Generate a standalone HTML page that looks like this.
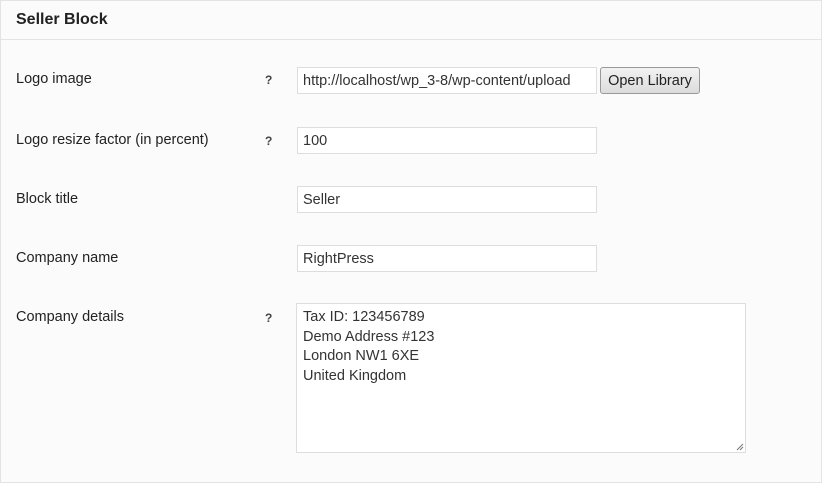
<!DOCTYPE html>
<html><head><style>
body{margin:0;width:822px;height:483px;background:#fff;font-family:"Liberation Sans",sans-serif;color:#222;}
.box{position:absolute;left:0;top:0;width:820px;height:481px;border:1px solid #e3e3e3;background:#fbfbfb;}
.hd{position:absolute;left:0;top:0;width:820px;height:38px;border-bottom:1px solid #e3e3e3;}
.hd span{position:absolute;left:15px;top:10px;font-size:16px;font-weight:bold;color:#222;}
.lbl{position:absolute;left:16px;font-size:14.5px;color:#222;}
.q{position:absolute;left:265px;font-size:12px;font-weight:bold;color:#444;}
.in{position:absolute;left:297px;width:298px;height:25px;border:1px solid #ddd;background:#fff;box-sizing:content-box;font-size:14.5px;color:#333;}
.in span{position:absolute;left:5px;top:5px;white-space:nowrap;}
.btn{position:absolute;left:600px;top:67px;width:98px;height:25px;border:1px solid #999;border-radius:3px;background:linear-gradient(#f2f2f2,#dcdcdc);font-size:14.5px;color:#222;text-align:center;line-height:27px;}
.ta{position:absolute;left:296px;top:303px;width:448px;height:148px;border:1px solid #ddd;background:#fff;font-size:14.5px;color:#333;}
.ta div{position:absolute;left:6px;top:4px;line-height:19.5px;}
</style></head><body>
<div class="box">
<div class="hd"><span>Seller Block</span></div>
</div>
<div class="lbl" style="top:71px">Logo image</div><div class="q" style="top:73px">?</div>
<div class="in" style="top:67px;overflow:hidden"><span>http://localhost/wp_3-8/wp-content/upload</span></div>
<div class="btn">Open Library</div>
<div class="lbl" style="top:132px">Logo resize factor (in percent)</div><div class="q" style="top:134px">?</div>
<div class="in" style="top:127px"><span>100</span></div>
<div class="lbl" style="top:191px">Block title</div>
<div class="in" style="top:186px"><span>Seller</span></div>
<div class="lbl" style="top:250px">Company name</div>
<div class="in" style="top:245px"><span>RightPress</span></div>
<div class="lbl" style="top:309px">Company details</div><div class="q" style="top:311px">?</div>
<div class="ta"><div>Tax ID: 123456789<br>Demo Address #123<br>London NW1 6XE<br>United Kingdom</div>
<svg style="position:absolute;right:1px;bottom:1px" width="8" height="8"><path d="M7 1L1 7M7 4L4 7" stroke="#777" stroke-width="1"/></svg></div>
</body></html>
